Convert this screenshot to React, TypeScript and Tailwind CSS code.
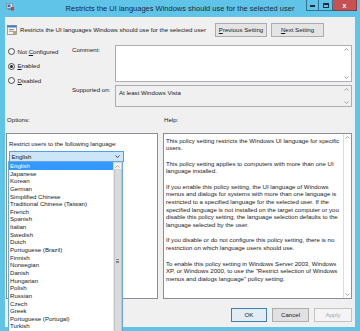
import React from 'react';

const languages = [
  'English', 'Japanese', 'Korean', 'German', 'Simplified Chinese', 'Traditional Chinese (Taiwan)',
  'French', 'Spanish', 'Italian', 'Swedish', 'Dutch', 'Portuguese (Brazil)', 'Finnish', 'Norwegian',
  'Danish', 'Hungarian', 'Polish', 'Russian', 'Czech', 'Greek', 'Portuguese (Portugal)', 'Turkish',
];

const helpLines = [
  'This policy setting restricts the Windows UI language for specific',
  'users.',
  '',
  'This policy setting applies to computers with more than one UI',
  'language installed.',
  '',
  'If you enable this policy setting, the UI language of Windows',
  'menus and dialogs for systems with more than one language is',
  'restricted to a specified language for the selected user. If the',
  'specified language is not installed on the target computer or you',
  'disable this policy setting, the language selection defaults to the',
  'language selected by the user.',
  '',
  'If you disable or do not configure this policy setting, there is no',
  'restriction on which language users should use.',
  '',
  'To enable this policy setting in Windows Server 2003, Windows',
  'XP, or Windows 2000, to use the "Restrict selection of Windows',
  'menus and dialogs language" policy setting.',
];

function Arrow({ up }: { up?: boolean }) {
  return (
    <svg width="5" height="3" viewBox="0 0 5 3" className="block">
      <path d={up ? 'M0.5 2.5 L2.5 0.5 L4.5 2.5' : 'M0.5 0.5 L2.5 2.5 L4.5 0.5'} fill="none" stroke="#9a9a9a" strokeWidth="0.9" />
    </svg>
  );
}

function Radio({ label, u, checked }: { label: string; u: number; checked?: boolean }) {
  return (
    <div className="flex items-center h-[14.5px] pl-[3px]">
      <span className="w-[7px] h-[7px] rounded-full border border-[#4d4d4d] bg-[#f6f6f6] flex items-center justify-center">
        {checked && <span className="w-[3px] h-[3px] rounded-full bg-[#222]" />}
      </span>
      <span className="ml-[2.5px]">
        {label.slice(0, u)}
        <span className="underline">{label[u]}</span>
        {label.slice(u + 1)}
      </span>
    </div>
  );
}

export default function App() {
  return (
    <div className="w-[360px] h-[331px] relative overflow-hidden bg-[#5fc4e8] text-[#1a1a1a] text-[6.1px] leading-none font-['Liberation_Sans',Arial,sans-serif]">
      {/* title bar */}
      <div className="grid grid-cols-[57px_1fr_57px] h-[17px]">
        <div className="pl-[6px] pt-[3px]">
          <svg width="8" height="8" viewBox="0 0 8 8">
            <rect x="0.5" y="0.5" width="6" height="4.5" fill="#e8eef4" stroke="#6b7b8c" strokeWidth="0.6" />
            <rect x="1.5" y="1.5" width="3" height="2.5" fill="#3b6fb5" />
            <rect x="2" y="5.5" width="3" height="1.2" fill="#6b7b8c" />
            <rect x="5" y="4" width="3" height="3.5" fill="#c9402f" />
          </svg>
        </div>
        <div className="text-center text-[7.5px] text-[#1b2a3c] pt-[4.5px] whitespace-nowrap">
          Restricts the UI languages Windows should use for the selected user
        </div>
        <div className="flex pl-[3px] pr-[3px] h-[11px]">
          <div className="w-[13px] border border-t-0 border-[#34718f] flex items-center justify-center">
            <span className="w-[5px] h-[1.5px] bg-[#1d2e3e] mt-[2px]" />
          </div>
          <div className="w-[14px] border border-t-0 border-l-0 border-[#34718f] flex items-center justify-center">
            <span className="w-[6px] h-[5px] border border-t-2 border-[#1d2e3e]" />
          </div>
          <div className="w-[24px] bg-[#c75050] border border-t-0 border-l-0 border-[#8c3a3a] flex items-center justify-center text-white font-bold text-[7px]">
            x
          </div>
        </div>
      </div>

      {/* client */}
      <div className="mx-[5px] h-[310px] bg-[#f0f0f0] flex flex-col">
        {/* header */}
        <div className="flex items-center h-[14px] mt-[6px] pr-[31px]">
          <svg width="10" height="10" viewBox="0 0 10 10" className="ml-[2px]">
            <rect x="0.5" y="0.5" width="9" height="9" fill="#f4f4f4" stroke="#6d7c8c" strokeWidth="0.7" />
            <rect x="0.5" y="0.5" width="9" height="2" fill="#4a7bb7" />
            <rect x="2" y="4" width="5" height="0.8" fill="#777" />
            <rect x="2" y="5.8" width="4" height="0.8" fill="#777" />
            <rect x="6" y="6" width="3" height="3" fill="#d5a040" />
          </svg>
          <span className="ml-[3px] flex-1 whitespace-nowrap">Restricts the UI languages Windows should use for the selected user</span>
          <div className="w-[52px] h-[14px] border border-[#acacac] bg-[#e4e4e4] flex items-center justify-center">
            <span><span className="underline">P</span>revious Setting</span>
          </div>
          <div className="w-[53px] h-[14px] ml-[4px] border border-[#acacac] bg-[#e4e4e4] flex items-center justify-center">
            <span><span className="underline">N</span>ext Setting</span>
          </div>
        </div>

        {/* settings */}
        <div className="flex mt-[8px] pr-[3px]">
          <div className="w-[67px]">
            <div className="mt-[-0.5px]">
              <Radio label="Not Configured" u={4} />
              <Radio label="Enabled" u={0} checked />
              <Radio label="Disabled" u={0} />
            </div>
          </div>
          <div className="w-[43px]">
            <div className="mt-[1.5px]">Comment:</div>
            <div className="mt-[34px]">Supported on:</div>
          </div>
          <div className="flex-1 flex flex-col gap-[3px]">
            <div className="h-[37px] border border-[#abadb3] bg-white flex justify-end">
              <div className="w-[9px] flex flex-col justify-between items-center py-[2px]">
                <Arrow up />
                <Arrow />
              </div>
            </div>
            <div className="h-[22px] border border-[#abadb3] bg-[#f0f0f0] flex">
              <div className="flex-1 pl-[3px] pt-[4px]">At least Windows Vista</div>
              <div className="w-[9px] flex flex-col justify-between items-center py-[2px]">
                <Arrow up />
                <Arrow />
              </div>
            </div>
          </div>
        </div>

        {/* options / help labels */}
        <div className="flex mt-[10px] h-[6px]">
          <div className="w-[158px] pl-[2px]">Options:</div>
          <div className="pl-[1px]">Help:</div>
        </div>

        {/* panels */}
        <div className="flex mt-[10px] h-[166px] pl-[1px] pr-[3px] gap-[5px]">
          <div className="w-[152px] border border-[#8a8f96] bg-white pl-[2px]">
            <div className="mt-[7px]">Restrict users to the following language:</div>
            <div className="mt-[4px] w-[115px] h-[11px] border border-[#569de5] bg-[#cde6f7] flex items-center pl-[1.5px]">
              <span className="flex-1">English</span>
              <svg width="5" height="3" viewBox="0 0 5 3" className="mr-[3px]">
                <path d="M0.5 0.5 L2.5 2.5 L4.5 0.5" fill="none" stroke="#333" strokeWidth="0.9" />
              </svg>
            </div>
          </div>
          <div className="flex-1 border border-[#8a8f96] bg-white flex">
            <div className="flex-1 pl-[2px] pt-[2.5px] leading-[7.7px] whitespace-nowrap">
              {helpLines.map((line, i) => (
                <div key={i} className="h-[7.7px]">{line}</div>
              ))}
            </div>
            <div className="w-[8px] border-l border-[#dcdcdc] flex flex-col justify-between items-center py-[2px]">
              <Arrow up />
              <Arrow />
            </div>
          </div>
        </div>

        {/* buttons */}
        <div className="flex justify-end mt-[9px] pr-[3px] gap-[5px]">
          <div className="w-[36px] h-[14px] border border-[#3c7fb1] bg-[#e3ecf4] flex items-center justify-center">OK</div>
          <div className="w-[37px] h-[14px] border border-[#acacac] bg-[#e1e1e1] flex items-center justify-center">Cancel</div>
          <div className="w-[38px] h-[14px] border border-[#c3c3c3] bg-[#f4f4f4] text-[#a8a8a8] flex items-center justify-center">Apply</div>
        </div>
      </div>

      {/* open language list */}
      <div className="absolute left-[8px] top-[161px] w-[115px] h-[175px] border border-[#6aa6e0] bg-white flex">
        <div className="flex-1">
          {languages.map((lang, i) => (
            <div
              key={lang}
              className={`h-[7.65px] leading-[7.65px] pl-[1px] whitespace-nowrap ${i === 0 ? 'bg-[#3399ff] text-white' : ''}`}
            >
              {lang}
            </div>
          ))}
        </div>
        <div className="w-[9px] flex flex-col bg-[#e8e8e8]">
          <div className="h-[8px] bg-[#f4f4f4] border border-[#d4d4d4] flex items-center justify-center">
            <Arrow up />
          </div>
          <div className="flex-1 mx-[0.5px] bg-[#dadada] border-x border-[#c4c4c4] flex flex-col items-center pt-[89px] gap-[1px]">
            <span className="w-[3px] h-[0.6px] bg-[#888]" />
            <span className="w-[3px] h-[0.6px] bg-[#888]" />
            <span className="w-[3px] h-[0.6px] bg-[#888]" />
          </div>
        </div>
      </div>
    </div>
  );
}
